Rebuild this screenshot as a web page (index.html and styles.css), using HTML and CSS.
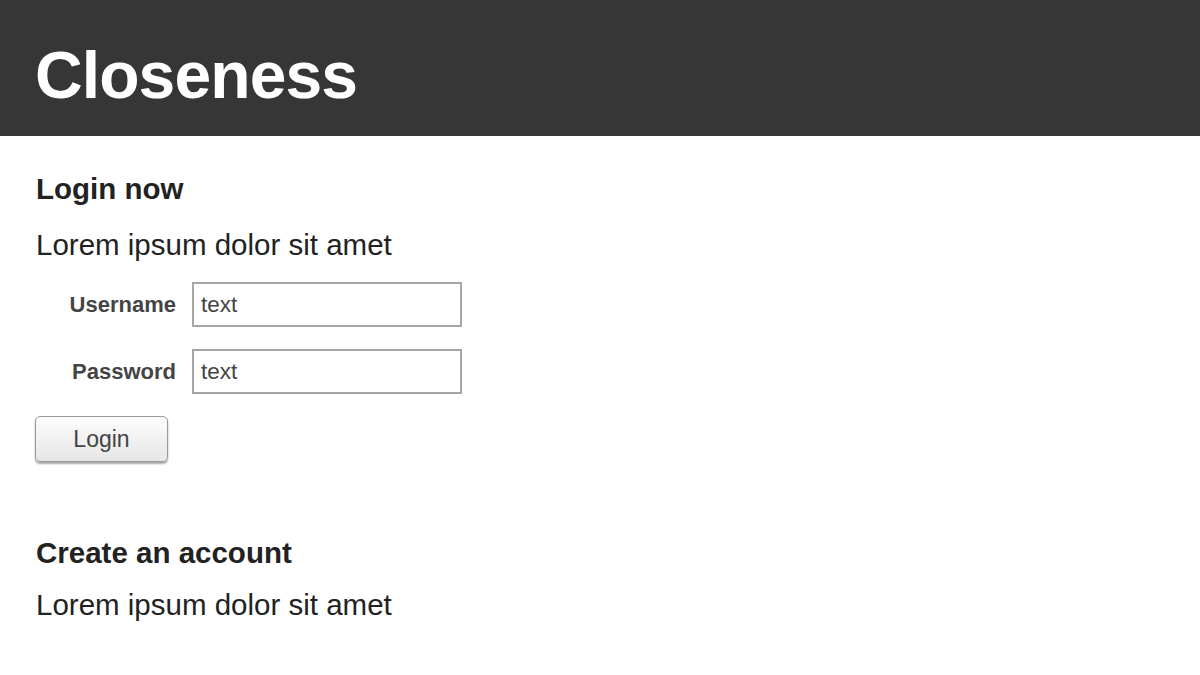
FILE: index.html
```html
<!DOCTYPE html>
<html>
<head>
<meta charset="utf-8">
<link rel="stylesheet" href="styles.css">
</head>
<body>
<header class="topbar">
  <h1 class="brand">Closeness</h1>
</header>
<main class="content">
  <section class="login">
    <h2 class="heading">Login now</h2>
    <p class="lead">Lorem ipsum dolor sit amet</p>
    <form class="form">
      <div class="row">
        <label class="label">Username</label>
        <div class="field">text</div>
      </div>
      <div class="row">
        <label class="label">Password</label>
        <div class="field">text</div>
      </div>
      <div class="button">Login</div>
    </form>
  </section>
  <section class="create">
    <h2 class="heading">Create an account</h2>
    <p class="lead">Lorem ipsum dolor sit amet</p>
  </section>
</main>
</body>
</html>
```
FILE: styles.css
```css
* { box-sizing: border-box; }
html, body { margin: 0; padding: 0; background: #fff; }
body { font-family: "Liberation Sans", Arial, sans-serif; color: #222; }
.topbar {
  background: #363636;
  height: 136px;
  display: flex;
  align-items: center;
  padding: 14px 0 0 35px;
}
.brand {
  margin: 0;
  color: #fff;
  font-size: 66px;
  font-weight: bold;
  line-height: 1;
  letter-spacing: -0.9px;
}
.content { padding: 36px 36px 0; }
.heading {
  margin: 0;
  font-size: 29.5px;
  font-weight: bold;
  line-height: 34px;
  color: #222;
}
.lead {
  margin: 22px 0 0;
  font-size: 29.5px;
  line-height: 34px;
  color: #222;
}
.form { margin-top: 20px; display: flex; flex-direction: column; gap: 22px; }
.row { display: flex; align-items: center; gap: 16px; }
.label {
  width: 140px;
  text-align: right;
  font-size: 22px;
  font-weight: bold;
  color: #444;
}
.field {
  width: 270px;
  height: 45px;
  border: 2px solid #a6a6a6;
  padding: 0 7px;
  font-size: 22.5px;
  line-height: 41px;
  color: #444;
}
.button {
  width: 133px;
  height: 46px;
  border: 1px solid #9a9a9a;
  border-radius: 5px;
  background: linear-gradient(#fdfdfd, #e6e6e6);
  box-shadow: 0 2px 2px rgba(0,0,0,0.35);
  display: flex;
  align-items: center;
  justify-content: center;
  font-size: 23px;
  color: #444;
  margin-left: -1px;
}
.create { margin-top: 74px; }
.create .lead { margin-top: 18px; }
```
